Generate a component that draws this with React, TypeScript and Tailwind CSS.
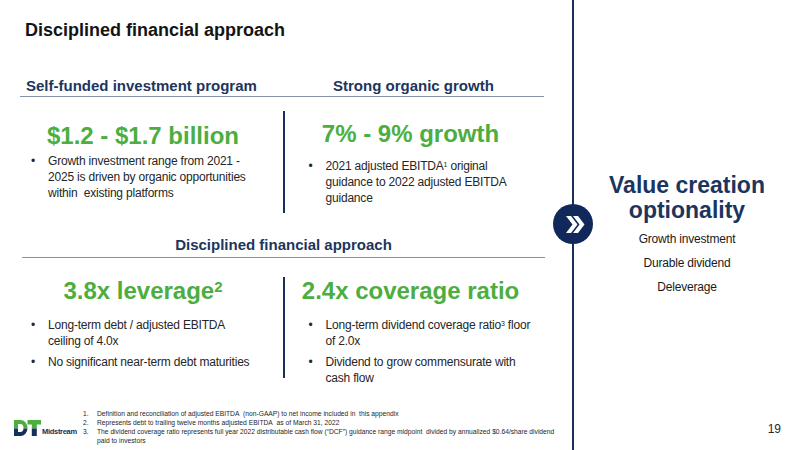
import React from "react";

function Bullet({ children, className = "" }: { children: React.ReactNode; className?: string }) {
  return (
    <div className={"flex " + className}>
      <span className="w-[17px] shrink-0">•</span>
      <span>{children}</span>
    </div>
  );
}

function Logo() {
  return (
    <svg width="27" height="16" viewBox="0 0 27 16" className="block">
      <defs>
        <clipPath id="lgTop">
          <rect x="0" y="0" width="27" height="8.5" />
        </clipPath>
        <clipPath id="lgBot">
          <rect x="0" y="8.5" width="27" height="8" />
        </clipPath>
      </defs>
      {(["lgTop", "lgBot"] as const).map((id) => (
        <g key={id} clipPath={`url(#${id})`} fill={id === "lgTop" ? "#4cae3f" : "#16305c"}>
          <path fillRule="evenodd" d="M0 0 H6.5 A7 8 0 0 1 6.5 16 H0 Z M4 4 H6.3 A3.2 4 0 0 1 6.3 12 H4 Z" />
          <rect x="13.5" y="0" width="13.5" height="4.5" />
          <rect x="17.8" y="0" width="5" height="16" />
        </g>
      ))}
    </svg>
  );
}

export default function App() {
  return (
    <div className="w-[800px] h-[450px] bg-white flex overflow-hidden font-['Liberation_Sans',Arial,sans-serif] text-[#262626]">
      {/* Left content */}
      <div className="w-[572px] shrink-0 flex flex-col">
        <h1 className="mt-[18px] ml-[25px] text-[18px] leading-[24px] font-bold text-[#141414]">
          Disciplined financial approach
        </h1>

        <div className="mt-[35px] ml-[20px] w-[524px] border-b border-[#8593a8] pb-[1px] flex text-[15px] leading-[18px] font-bold text-[#1c355e]">
          <div className="w-[313px] pl-[6px]">Self-funded investment program</div>
          <div>Strong organic growth</div>
        </div>

        {/* Upper section */}
        <div className="mt-[14px] pl-[26px] flex">
          <div className="w-[234px] pt-[11px]">
            <div className="flex justify-center text-[24px] leading-[28px] font-bold text-[#4cae3f] whitespace-nowrap">
              <span>$1.2 - $1.7 billion</span>
            </div>
            <div className="mt-[3px] pl-[5px] text-[12px] leading-[16px] tracking-[-0.2px]">
              <Bullet>
                Growth investment range from 2021 -<br />
                2025 is driven by organic opportunities<br />
                within&nbsp; existing platforms
              </Bullet>
            </div>
          </div>
          <div className="ml-[23px] w-[1.5px] h-[102px] bg-[#16305c]" />
          <div className="ml-[21px] w-[230px] pt-[9px]">
            <div className="w-[210px] flex justify-center text-[24px] leading-[28px] font-bold text-[#4cae3f] whitespace-nowrap">
              <span>7% - 9% growth</span>
            </div>
            <div className="mt-[10px] pl-[3px] text-[12px] leading-[16px] tracking-[-0.2px]">
              <Bullet>
                2021 adjusted EBITDA<sup className="text-[7px]">1</sup> original<br />
                guidance to 2022 adjusted EBITDA<br />
                guidance
              </Bullet>
            </div>
          </div>
        </div>

        <div className="mt-[23px] ml-[22px] w-[523px] border-b border-[#8593a8] pb-[3px] flex justify-center text-[15px] leading-[18px] font-bold text-[#1c355e]">
          Disciplined financial approach
        </div>

        {/* Lower section */}
        <div className="mt-[19px] pl-[26px] flex">
          <div className="w-[234px]">
            <div className="flex justify-center text-[24px] leading-[28px] font-bold text-[#4cae3f] whitespace-nowrap">
              <span>
                3.8x leverage<sup className="text-[15px]">2</sup>
              </span>
            </div>
            <div className="mt-[12px] pl-[5px] text-[12px] leading-[16px] tracking-[-0.2px] flex flex-col gap-[5px]">
              <Bullet>
                Long-term debt / adjusted EBITDA<br />
                ceiling of 4.0x
              </Bullet>
              <Bullet>No significant near-term debt maturities</Bullet>
            </div>
          </div>
          <div className="ml-[23px] w-[1.5px] h-[101px] bg-[#16305c]" />
          <div className="ml-[21px] w-[230px]">
            <div className="w-[210px] flex justify-center text-[24px] leading-[28px] font-bold text-[#4cae3f] whitespace-nowrap">
              <span>2.4x coverage ratio</span>
            </div>
            <div className="mt-[12px] pl-[3px] text-[12px] leading-[16px] tracking-[-0.2px] flex flex-col gap-[5px]">
              <Bullet>
                Long-term dividend coverage ratio<sup className="text-[7px]">3</sup> floor<br />
                of 2.0x
              </Bullet>
              <Bullet>
                Dividend to grow commensurate with<br />
                cash flow
              </Bullet>
            </div>
          </div>
        </div>

        {/* Footer */}
        <div className="mt-[23px] flex items-start">
          <div className="ml-[14px] mt-[11px] w-[66px] flex items-end gap-[1px]">
            <Logo />
            <span className="font-['Liberation_Sans_Narrow','Liberation_Sans',sans-serif] text-[7.5px] leading-[9px] font-bold text-[#16305c] tracking-[-0.3px]">
              Midstream
            </span>
          </div>
          <ol className="ml-[3px] text-[6.7px] leading-[9px] text-[#262626] whitespace-nowrap">
            <li className="flex">
              <span className="w-[14px]">1.</span>
              <span>Definition and reconciliation of adjusted EBITDA&nbsp; (non-GAAP) to net income included in&nbsp; this appendix</span>
            </li>
            <li className="flex">
              <span className="w-[14px]">2.</span>
              <span>Represents debt to trailing twelve months adjusted EBITDA&nbsp; as of March 31, 2022</span>
            </li>
            <li className="flex">
              <span className="w-[14px] shrink-0">3.</span>
              <span>
                The dividend coverage ratio represents full year 2022 distributable cash flow (“DCF”) guidance range midpoint&nbsp; divided by annualized $0.64/share dividend
                <br />
                paid to investors
              </span>
            </li>
          </ol>
        </div>
      </div>

      {/* Divider line with chevron circle */}
      <div className="relative w-[2px] shrink-0 bg-[#16305c]">
        <div className="absolute left-1/2 -translate-x-1/2 top-[204px] w-[40px] h-[40px] rounded-full bg-[#11295a] flex items-center justify-center">
          <svg width="40" height="40" viewBox="0 0 40 40">
            <polygon points="13,12 18,12 24.5,20.5 18,29 13,29 19.5,20.5" fill="#fff" />
            <polygon points="20,12 25,12 31.5,20.5 25,29 20,29 26.5,20.5" fill="#fff" />
          </svg>
        </div>
      </div>

      {/* Right panel */}
      <div className="flex-1 flex flex-col items-center">
        <div className="mt-[173px] text-[23px] leading-[25px] font-bold text-[#1c355e] text-center">
          Value creation
          <br />
          optionality
        </div>
        <div className="mt-[4px] text-[12px] leading-[24px] text-[#1a1a1a] text-center tracking-[-0.2px]">
          <div>Growth investment</div>
          <div>Durable dividend</div>
          <div>Deleverage</div>
        </div>
        <div className="mt-auto mb-[13px] self-end pr-[19px] text-[12px] leading-[16px] text-[#262626]">19</div>
      </div>
    </div>
  );
}
